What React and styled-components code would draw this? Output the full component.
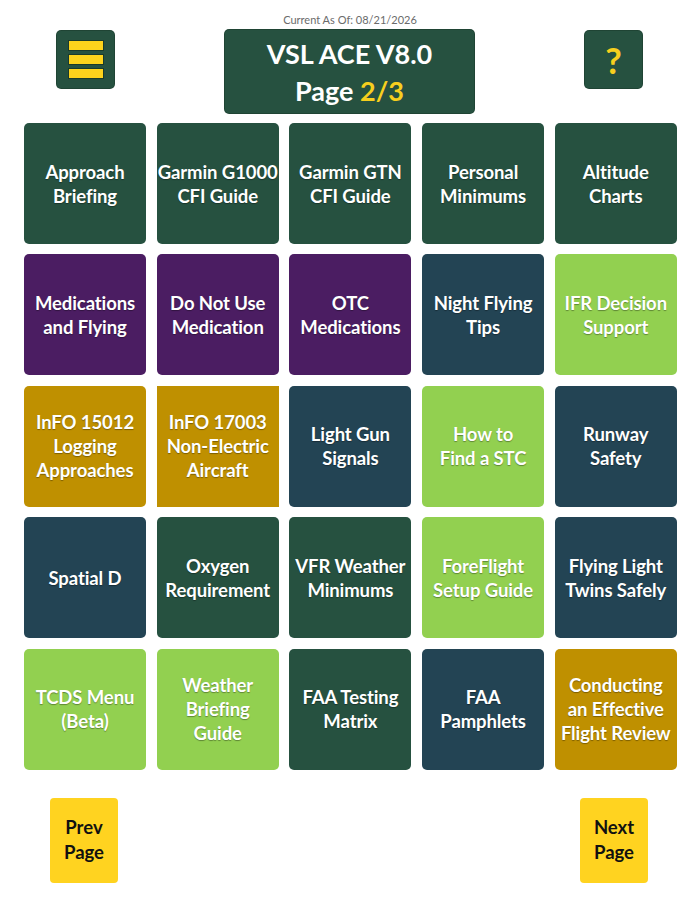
import styled, { createGlobalStyle } from 'styled-components';

const GlobalStyle = createGlobalStyle`
  html, body {
    margin: 0;
    padding: 0;
    background: #ffffff;
  }
  body {
    font-family: Lato, 'Noto Sans', 'Liberation Sans', sans-serif;
  }
`;

const COLORS = {
  green: '#265140',
  purple: '#4b1d62',
  teal: '#234454',
  lime: '#92d050',
  gold: '#bf9000',
};

const Page = styled.div`
  width: 700px;
  padding-top: 13px;
  padding-bottom: 30px;
`;

const Stamp = styled.div`
  text-align: center;
  font-size: 11px;
  line-height: 14px;
  color: #6b6b6b;
  height: 17px;
`;

const Header = styled.div`
  display: grid;
  grid-template-columns: 1fr auto 1fr;
  align-items: start;
  padding: 0 58px 0 57px;
`;

const SquareButton = styled.div`
  width: 57px;
  height: 57px;
  margin-top: 1px;
  background: ${COLORS.green};
  border-radius: 4px;
  display: flex;
  align-items: center;
  justify-content: center;
  justify-self: ${(p) => p.$side};
  color: #f7cf1e;
  font-size: 36px;
  font-weight: 700;
  box-shadow: 0 0 0 1px #1f4434;
`;

const MenuBars = styled.div`
  display: flex;
  flex-direction: column;
  gap: 3px;
`;

const Bar = styled.div`
  width: 34px;
  height: 9px;
  background: #fdd31c;
  border: 1px solid #1a3a2c;
`;

const TitleBox = styled.div`
  width: 249px;
  height: 83px;
  background: ${COLORS.green};
  border-radius: 4px;
  box-shadow: 0 0 0 1px #1f4434;
  color: #ffffff;
  display: flex;
  flex-direction: column;
  align-items: center;
  justify-content: center;
  font-size: 27px;
  font-weight: 700;
  line-height: 37px;
`;

const Accent = styled.span`
  color: #f7cf1e;
`;

const Grid = styled.div`
  display: grid;
  grid-template-columns: repeat(5, 122px);
  grid-auto-rows: 121px;
  column-gap: 10.7px;
  row-gap: 10.4px;
  padding: 10px 23px 0 24px;
`;

const Tile = styled.div`
  background: ${(p) => COLORS[p.$color]};
  border-radius: ${(p) => (p.$square ? '0' : '5px')};
  color: #ffffff;
  display: flex;
  align-items: center;
  justify-content: center;
  text-align: center;
  font-size: 18.5px;
  font-weight: 700;
  line-height: 24px;
  letter-spacing: -0.1px;
  padding: 0 1px;
  text-shadow: 0 1px 1px rgba(0, 0, 0, 0.35);
  white-space: pre-line;
`;

const Footer = styled.div`
  display: flex;
  justify-content: space-between;
  padding: 28px 52px 0 50px;
`;

const NavButton = styled.div`
  width: 68px;
  height: 85px;
  background: #ffd320;
  border-radius: 4px;
  display: flex;
  align-items: center;
  justify-content: center;
  text-align: center;
  color: #111111;
  font-size: 18.5px;
  font-weight: 700;
  line-height: 25px;
  white-space: pre-line;
`;

const tiles = [
  ['Approach\nBriefing', 'green'],
  ['Garmin G1000\nCFI Guide', 'green'],
  ['Garmin GTN\nCFI Guide', 'green'],
  ['Personal\nMinimums', 'green'],
  ['Altitude\nCharts', 'green'],
  ['Medications\nand Flying', 'purple'],
  ['Do Not Use\nMedication', 'purple'],
  ['OTC\nMedications', 'purple'],
  ['Night Flying\nTips', 'teal'],
  ['IFR Decision\nSupport', 'lime'],
  ['InFO 15012\nLogging\nApproaches', 'gold'],
  ['InFO 17003\nNon-Electric\nAircraft', 'gold', true],
  ['Light Gun\nSignals', 'teal'],
  ['How to\nFind a STC', 'lime'],
  ['Runway\nSafety', 'teal'],
  ['Spatial D', 'teal'],
  ['Oxygen\nRequirement', 'green'],
  ['VFR Weather\nMinimums', 'green'],
  ['ForeFlight\nSetup Guide', 'lime'],
  ['Flying Light\nTwins Safely', 'teal'],
  ['TCDS Menu\n(Beta)', 'lime'],
  ['Weather\nBriefing\nGuide', 'lime'],
  ['FAA Testing\nMatrix', 'green'],
  ['FAA\nPamphlets', 'teal'],
  ['Conducting\nan Effective\nFlight Review', 'gold'],
];

const App = () => {
  return (
    <Page>
      <GlobalStyle />
      <Stamp>Current As Of: 08/21/2026</Stamp>
      <Header>
        <SquareButton $side="start">
          <MenuBars>
            <Bar />
            <Bar />
            <Bar />
          </MenuBars>
        </SquareButton>
        <TitleBox>
          <div>VSL ACE V8.0</div>
          <div>
            Page <Accent>2/3</Accent>
          </div>
        </TitleBox>
        <SquareButton $side="end">?</SquareButton>
      </Header>
      <Grid>
        {tiles.map(([label, color, square]) => (
          <Tile key={label} $color={color} $square={square}>
            {label}
          </Tile>
        ))}
      </Grid>
      <Footer>
        <NavButton>{'Prev\nPage'}</NavButton>
        <NavButton>{'Next\nPage'}</NavButton>
      </Footer>
    </Page>
  );
};

export default App;
